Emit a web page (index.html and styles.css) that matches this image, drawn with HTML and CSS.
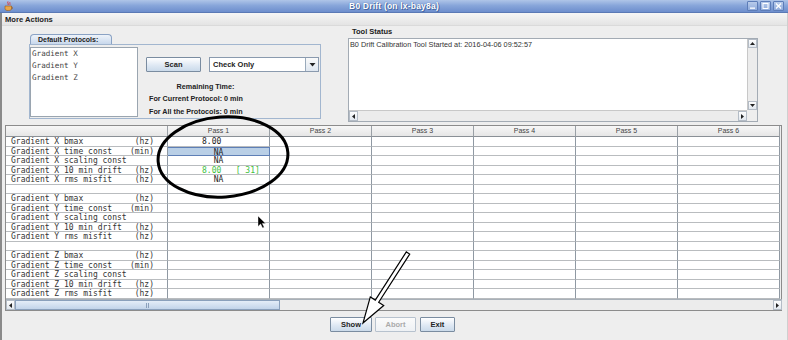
FILE: index.html
```html
<!DOCTYPE html>
<html>
<head>
<meta charset="utf-8">
<link rel="stylesheet" href="styles.css">
</head>
<body>
<div class="window">
  <div class="titlebar">
    <div class="tb-left">
      <svg class="app-icon" width="9" height="10" viewBox="0 0 9 10">
        <path d="M4 0.5 C3 2 5 2.5 4 4" stroke="#d33" stroke-width="1" fill="none"/>
        <path d="M6 1 C5.2 2.2 6.6 2.8 5.8 4" stroke="#d33" stroke-width="0.8" fill="none"/>
        <path d="M1 5 H7.5 V7.5 C7.5 9 6 9.6 4.2 9.6 C2.4 9.6 1 9 1 7.5 Z" fill="#e8a64a" stroke="#9a5a18" stroke-width="0.6"/>
        <path d="M7.5 6 C9 6 9 8 7.3 8" stroke="#9a5a18" stroke-width="0.7" fill="none"/>
      </svg>
    </div>
    <div class="title">B0 Drift (on lx-bay8a)</div>
    <div class="tb-right">
      <span class="wbtn"><svg width="9" height="8" viewBox="0 0 9 8"><rect x="2" y="5.5" width="5" height="1.3" fill="#fff"/></svg></span>
      <span class="wbtn"><svg width="9" height="8" viewBox="0 0 9 8"><rect x="2" y="1.5" width="5" height="5" fill="none" stroke="#fff" stroke-width="1"/></svg></span>
      <span class="wbtn"><svg width="9" height="8" viewBox="0 0 9 8"><path d="M2 1.5 L7 6.5 M7 1.5 L2 6.5" stroke="#fff" stroke-width="1.3"/></svg></span>
    </div>
  </div>
  <div class="content">
    <div class="menubar"><span class="menu">More Actions</span></div>
    <div class="top">
      <div class="protocols">
        <div class="tab">Default Protocols:</div>
        <div class="tab-body">
          <div class="list">
            <div>Gradient X</div>
            <div>Gradient Y</div>
            <div>Gradient Z</div>
          </div>
          <div class="controls">
            <div class="ctrl-row">
              <div class="btn scan">Scan</div>
              <div class="combo"><span class="combo-text">Check Only</span><span class="combo-arrow"><svg width="7" height="5" viewBox="0 0 7 5"><path d="M0.5 1 H6.5 L3.5 4.5 Z" fill="#222"/></svg></span></div>
            </div>
            <div class="remaining">
              <div class="rem-head">Remaining Time:</div>
              <div class="rem-line">For Current Protocol: 0 min</div>
              <div class="rem-line">For All the Protocols: 0 min</div>
            </div>
          </div>
        </div>
      </div>
      <div class="status">
        <div class="status-label">Tool Status</div>
        <div class="textarea">
          <div class="ta-text">B0 Drift Calibration Tool Started at: 2016-04-06 09:52:57</div>
          <div class="vscroll">
            <span class="sb-btn"><svg width="7" height="5" viewBox="0 0 7 5"><path d="M1 4 H6 L3.5 1 Z" fill="#222"/></svg></span>
            <span class="sb-track"></span>
            <span class="sb-btn"><svg width="7" height="5" viewBox="0 0 7 5"><path d="M1 1 H6 L3.5 4 Z" fill="#222"/></svg></span>
          </div>
          <div class="hscroll">
            <span class="sb-btn h"><svg width="5" height="7" viewBox="0 0 5 7"><path d="M4 1 V6 L1 3.5 Z" fill="#222"/></svg></span>
            <span class="sb-track h"></span>
            <span class="sb-btn h"><svg width="5" height="7" viewBox="0 0 5 7"><path d="M1 1 V6 L4 3.5 Z" fill="#222"/></svg></span>
          </div>
          <div class="corner"></div>
        </div>
      </div>
    </div>

    <div class="table">
      <div class="grid">
        <div class="th first"></div>
        <div class="th">Pass 1</div>
        <div class="th">Pass 2</div>
        <div class="th">Pass 3</div>
        <div class="th">Pass 4</div>
        <div class="th">Pass 5</div>
        <div class="th">Pass 6</div>

        <div class="td lab"><span>Gradient X bmax</span><span>(hz)</span></div>
        <div class="td val left">8.00</div><div class="td"></div><div class="td"></div><div class="td"></div><div class="td"></div><div class="td"></div>
        <div class="td lab"><span>Gradient X time const</span><span>(min)</span></div>
        <div class="td val sel">NA</div><div class="td"></div><div class="td"></div><div class="td"></div><div class="td"></div><div class="td"></div>
        <div class="td lab"><span>Gradient X scaling const</span><span></span></div>
        <div class="td val">NA</div><div class="td"></div><div class="td"></div><div class="td"></div><div class="td"></div><div class="td"></div>
        <div class="td lab"><span>Gradient X 10 min drift</span><span>(hz)</span></div>
        <div class="td val left green">8.00   [ 31]</div><div class="td"></div><div class="td"></div><div class="td"></div><div class="td"></div><div class="td"></div>
        <div class="td lab"><span>Gradient X rms misfit</span><span>(hz)</span></div>
        <div class="td val">NA</div><div class="td"></div><div class="td"></div><div class="td"></div><div class="td"></div><div class="td"></div>
        <div class="td lab"></div>
        <div class="td"></div><div class="td"></div><div class="td"></div><div class="td"></div><div class="td"></div><div class="td"></div>

        <div class="td lab"><span>Gradient Y bmax</span><span>(hz)</span></div>
        <div class="td"></div><div class="td"></div><div class="td"></div><div class="td"></div><div class="td"></div><div class="td"></div>
        <div class="td lab"><span>Gradient Y time const</span><span>(min)</span></div>
        <div class="td"></div><div class="td"></div><div class="td"></div><div class="td"></div><div class="td"></div><div class="td"></div>
        <div class="td lab"><span>Gradient Y scaling const</span><span></span></div>
        <div class="td"></div><div class="td"></div><div class="td"></div><div class="td"></div><div class="td"></div><div class="td"></div>
        <div class="td lab"><span>Gradient Y 10 min drift</span><span>(hz)</span></div>
        <div class="td"></div><div class="td"></div><div class="td"></div><div class="td"></div><div class="td"></div><div class="td"></div>
        <div class="td lab"><span>Gradient Y rms misfit</span><span>(hz)</span></div>
        <div class="td"></div><div class="td"></div><div class="td"></div><div class="td"></div><div class="td"></div><div class="td"></div>
        <div class="td lab"></div>
        <div class="td"></div><div class="td"></div><div class="td"></div><div class="td"></div><div class="td"></div><div class="td"></div>

        <div class="td lab"><span>Gradient Z bmax</span><span>(hz)</span></div>
        <div class="td"></div><div class="td"></div><div class="td"></div><div class="td"></div><div class="td"></div><div class="td"></div>
        <div class="td lab"><span>Gradient Z time const</span><span>(min)</span></div>
        <div class="td"></div><div class="td"></div><div class="td"></div><div class="td"></div><div class="td"></div><div class="td"></div>
        <div class="td lab"><span>Gradient Z scaling const</span><span></span></div>
        <div class="td"></div><div class="td"></div><div class="td"></div><div class="td"></div><div class="td"></div><div class="td"></div>
        <div class="td lab"><span>Gradient Z 10 min drift</span><span>(hz)</span></div>
        <div class="td"></div><div class="td"></div><div class="td"></div><div class="td"></div><div class="td"></div><div class="td"></div>
        <div class="td lab"><span>Gradient Z rms misfit</span><span>(hz)</span></div>
        <div class="td"></div><div class="td"></div><div class="td"></div><div class="td"></div><div class="td"></div><div class="td"></div>
      </div>
      <div class="tscroll">
        <span class="sb-btn h"><svg width="5" height="7" viewBox="0 0 5 7"><path d="M4 1 V6 L1 3.5 Z" fill="#222"/></svg></span>
        <span class="tthumb"><span class="grip"></span></span>
        <span class="ttrack"></span>
        <span class="sb-btn h"><svg width="5" height="7" viewBox="0 0 5 7"><path d="M1 1 V6 L4 3.5 Z" fill="#222"/></svg></span>
      </div>
    </div>

    <div class="buttons">
      <div class="btn show">Show</div>
      <div class="btn abort">Abort</div>
      <div class="btn exit">Exit</div>
    </div>
  </div>

  <svg class="overlay" width="788" height="340" viewBox="0 0 788 340">
    <ellipse cx="223" cy="157" rx="65" ry="40" transform="rotate(-4 223 157)" fill="none" stroke="#000" stroke-width="3"/>
    <polygon points="409.7,254.1 378.7,302.3 383.7,305.5 363,323 370.3,296.9 375.3,300.1 406.3,251.9" fill="#fff" stroke="#000" stroke-width="1.2" stroke-linejoin="miter"/>
    <polygon points="258,216 258,226.5 260.6,224 262.6,228 264.2,227.2 262.3,223.4 265.6,223.4" fill="#000" stroke="#fff" stroke-width="0.4"/>
  </svg>
</div>
</body>
</html>
```
FILE: styles.css
```css
* { box-sizing: border-box; }
html, body { margin: 0; padding: 0; }
body {
  width: 788px;
  height: 340px;
  overflow: hidden;
  background: #eeeeee;
  font-family: "Liberation Sans", Arial, sans-serif;
  color: #222;
}
.window {
  position: relative;
  width: 788px;
  height: 340px;
}
.titlebar {
  height: 13px;
  display: grid;
  grid-template-columns: 1fr auto 1fr;
  align-items: center;
  background: linear-gradient(#afc5e8, #88a6da 45%, #6d8ecd);
  border-bottom: 1px solid #5a79b5;
}
.tb-left { display: flex; align-items: center; padding-left: 4px; }
.app-icon { display: block; }
.title {
  color: #fff;
  font-weight: bold;
  font-size: 8.5px;
  letter-spacing: 0.2px;
  text-shadow: 0 0 1px #3a5a96, 1px 1px 0 #4a6aa6;
}
.tb-right {
  display: flex;
  justify-content: flex-end;
  gap: 2px;
  padding-right: 4px;
}
.wbtn {
  width: 11px;
  height: 10px;
  border: 1px solid #5d7db8;
  border-radius: 1px;
  background: linear-gradient(#b8cbea, #8fabdc);
  display: flex;
  align-items: center;
  justify-content: center;
}
.wbtn svg { display: block; }

.content {
  height: 327px;
  border-left: 2px solid #8a8a8a;
  border-right: 1px solid #cfcfcf;
}
.menubar {
  height: 13px;
  background: linear-gradient(#f6f6f6, #e4e4e4);
  display: flex;
  align-items: center;
  padding-left: 3px;
  border-bottom: 1px solid #dadada;
}
.menu {
  font-size: 7.6px;
  font-weight: bold;
  color: #222;
}

.top {
  display: flex;
  height: 98px;
  padding-left: 27px;
}
.protocols {
  width: 292px;
  margin-top: 8px;
}
.tab {
  width: 82px;
  height: 10px;
  margin-left: 1px;
  border: 1px solid #8aa2c4;
  border-bottom: none;
  border-radius: 4px 4px 0 0;
  background: linear-gradient(#eef3fa, #c8d8ec);
  font-size: 7px;
  font-weight: bold;
  line-height: 9px;
  padding-left: 7px;
  color: #222;
}
.tab-body {
  height: 75px;
  border: 1px solid #a2b6cf;
  display: flex;
  padding-top: 2px;
}
.list {
  width: 108px;
  height: 70px;
  background: #fff;
  border: 1px solid #9aa5b0;
  font-family: "DejaVu Sans Mono", "Liberation Mono", monospace;
  font-size: 7.6px;
  line-height: 12px;
  color: #444;
  padding: 0 0 0 1px;
}
.controls {
  margin-left: 8px;
  width: 174px;
}
.ctrl-row {
  display: flex;
  gap: 8px;
  margin-top: 10px;
}
.btn {
  height: 15px;
  border: 1px solid #7a8ca0;
  border-radius: 1px;
  background: linear-gradient(#ffffff, #dde7f3 60%, #cbdaea);
  font-size: 7.5px;
  font-weight: bold;
  display: flex;
  align-items: center;
  justify-content: center;
  color: #222;
}
.scan { width: 55px; }
.combo {
  width: 110px;
  height: 15px;
  background: #fff;
  border: 1px solid #8a9aae;
  display: flex;
  align-items: center;
}
.combo-text {
  flex: 1;
  font-size: 7.5px;
  font-weight: bold;
  padding-left: 3px;
}
.combo-arrow {
  width: 13px;
  height: 13px;
  border-left: 1px solid #9aaabb;
  background: linear-gradient(#fafafa, #dfe7f0);
  display: flex;
  align-items: center;
  justify-content: center;
}
.combo-arrow svg { display: block; }
.remaining {
  margin-top: 9px;
  padding-left: 3px;
  width: 110px;
}
.rem-head {
  text-align: center;
  font-size: 7.2px;
  font-weight: bold;
  line-height: 12px;
  padding-left: 6px;
}
.rem-line {
  font-size: 7.2px;
  font-weight: bold;
  line-height: 12.5px;
  white-space: nowrap;
}

.status {
  margin-left: 27px;
  width: 410px;
}
.status-label {
  margin-top: 1px;
  height: 11px;
  font-size: 7.5px;
  font-weight: bold;
  line-height: 10px;
  padding-left: 4px;
}
.textarea {
  height: 84px;
  border: 1px solid #a3abb4;
  background: #fff;
  display: grid;
  grid-template-columns: 1fr 10px;
  grid-template-rows: 1fr 11px;
}
.ta-text {
  font-size: 7.3px;
  line-height: 10px;
  padding: 1px 0 0 1px;
  color: #333;
}
.vscroll {
  display: flex;
  flex-direction: column;
  background: #eeeeee;
  border-left: 1px solid #c8c8c8;
}
.sb-btn {
  width: 9px;
  height: 9px;
  display: flex;
  align-items: center;
  justify-content: center;
  background: linear-gradient(#fdfdfd, #e2e8ef);
  border: 1px solid #b4bcc6;
}
.sb-btn.h { width: 9px; height: 10px; }
.sb-btn svg { display: block; }
.sb-track { flex: 1; background: #ececec; }
.hscroll {
  display: flex;
  background: #eeeeee;
  border-top: 1px solid #c8c8c8;
}
.corner { background: #eeeeee; }

.table {
  margin: 1px 0 0 3px;
  width: 777px;
  height: 186px;
  border: 1px solid #8c8c8c;
  background: #eeeeee;
  display: flex;
  flex-direction: column;
}
.grid {
  display: grid;
  grid-template-columns: 162px repeat(6, 102px);
  grid-template-rows: 11px;
  grid-auto-rows: 9.5px;
  width: 774px;
}
.th {
  background: linear-gradient(#f7f7f7, #e6e6e6);
  border-right: 1px solid #9aa0a6;
  border-bottom: 1px solid #8a9096;
  font-size: 7px;
  line-height: 10px;
  text-align: center;
  color: #444;
}
.td {
  background: #fff;
  border-right: 1px solid #8f99a3;
  border-bottom: 1px solid #b9bcbf;
  font-family: "DejaVu Sans Mono", "Liberation Mono", monospace;
  font-size: 8px;
  line-height: 9px;
  color: #222;
  white-space: pre;
  overflow: hidden;
}
.lab {
  display: flex;
  justify-content: space-between;
  padding: 0 13px 0 5px;
  color: #333;
}
.val { text-align: center; }
.val.left { text-align: left; padding-left: 34px; }
.green { color: #3ec23e; }
.sel {
  background: #b9cfe6;
  border: 1px solid #5e7fb6;
  border-left: none;
}
.tscroll {
  margin-top: auto;
  height: 11px;
  display: flex;
  border-top: 1px solid #a8b0b8;
  width: 776px;
}
.tthumb {
  width: 265px;
  background: linear-gradient(#e4edf8, #c2d4ea);
  border: 1px solid #8aa0bc;
  display: flex;
  align-items: center;
  justify-content: center;
}
.grip {
  width: 3px;
  height: 5px;
  border-left: 1px solid #8aa0bc;
  border-right: 1px solid #8aa0bc;
}
.ttrack { flex: 1; background: #ececec; }

.buttons {
  display: flex;
  justify-content: center;
  gap: 3px;
  margin-top: 6px;
  padding-right: 4px;
}
.show { width: 42px; }
.abort {
  width: 41px;
  color: #aaaaaa;
  border-color: #b7c2ce;
  background: linear-gradient(#fbfbfb, #eef1f4);
}
.exit { width: 35px; margin-left: 1px; }

.overlay {
  position: absolute;
  top: 0;
  left: 0;
  pointer-events: none;
}
```
